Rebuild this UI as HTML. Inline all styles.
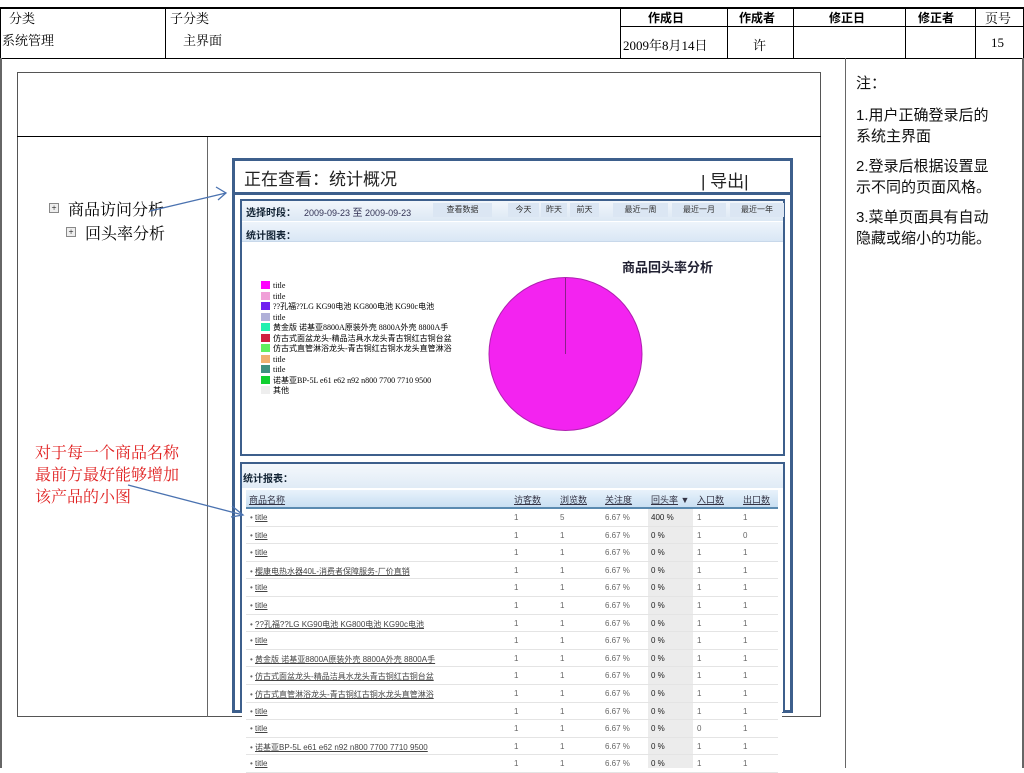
<!DOCTYPE html>
<html><head><meta charset="utf-8"><style>
*{margin:0;padding:0;box-sizing:border-box}
body{width:1024px;height:768px;position:relative;background:#fff;overflow:hidden;font-family:"Liberation Serif","Noto Serif CJK SC","Noto Sans CJK SC",serif;color:#000}
.a{position:absolute}
.l{position:absolute;background:#000}
.g{position:absolute;background:#666}
.t{font-size:13px;white-space:nowrap}
.s{font-family:"Liberation Sans","Noto Sans CJK SC",sans-serif}
.row{position:absolute;left:246px;width:532px;height:17.6px;border-bottom:1px solid #e4e4e4;font-size:8px;color:#666;font-family:"Liberation Sans","Noto Sans CJK SC",sans-serif}
.row span{position:absolute;top:4px}
.row u{color:#444}
.leg{position:absolute;left:261px;font-size:8px;font-family:"Liberation Serif","Noto Sans CJK SC",serif;white-space:nowrap;line-height:10px}
.leg i{display:inline-block;width:9px;height:8px;margin-right:3px;vertical-align:-1px}
.btn{position:absolute;top:203px;height:14px;background:#dbe6f3;font-size:8px;color:#333;text-align:center;line-height:14px;font-family:"Liberation Sans","Noto Sans CJK SC",sans-serif}
</style></head><body>
<div class="l" style="left:0;top:7px;width:1024px;height:2px"></div>
<div class="l" style="left:620px;top:26px;width:404px;height:1px"></div>
<div class="l" style="left:0;top:58px;width:1024px;height:1px"></div>
<div class="l" style="left:0;top:7px;width:1px;height:52px"></div>
<div class="l" style="left:165px;top:7px;width:1px;height:52px"></div>
<div class="l" style="left:620px;top:7px;width:1px;height:52px"></div>
<div class="l" style="left:727px;top:7px;width:1px;height:52px"></div>
<div class="l" style="left:793px;top:7px;width:1px;height:52px"></div>
<div class="l" style="left:905px;top:7px;width:1px;height:52px"></div>
<div class="l" style="left:975px;top:7px;width:1px;height:52px"></div>
<div class="l" style="left:1023px;top:7px;width:1px;height:52px"></div>
<div class="a t" style="left:9px;top:8px">分类</div>
<div class="a t" style="left:2px;top:30px">系统管理</div>
<div class="a t" style="left:170px;top:8px">子分类</div>
<div class="a t" style="left:183px;top:30px">主界面</div>
<div class="a t s" style="left:648px;top:9px;font-weight:bold;font-size:12px">作成日</div>
<div class="a t s" style="left:739px;top:9px;font-weight:bold;font-size:12px">作成者</div>
<div class="a t s" style="left:829px;top:9px;font-weight:bold;font-size:12px">修正日</div>
<div class="a t s" style="left:918px;top:9px;font-weight:bold;font-size:12px">修正者</div>
<div class="a t" style="left:985px;top:8px">页号</div>
<div class="a t" style="left:623px;top:35px">2009年8月14日</div>
<div class="a t" style="left:753px;top:35px">许</div>
<div class="a t" style="left:991px;top:35px">15</div>
<div class="g" style="left:0;top:58px;width:2px;height:710px"></div>
<div class="g" style="left:845px;top:58px;width:1px;height:710px"></div>
<div class="g" style="left:1022px;top:58px;width:2px;height:710px"></div>
<div class="a" style="left:17px;top:72px;width:804px;height:645px;border:1px solid #555"></div>
<div class="l" style="left:17px;top:136px;width:804px;height:1px"></div>
<div class="g" style="left:207px;top:137px;width:1px;height:580px"></div>
<div class="a s" style="left:856px;top:74px;font-size:15px;line-height:20px;width:155px;color:#111">注：</div>
<div class="a s" style="left:856px;top:105px;font-size:15px;line-height:21px;width:140px;color:#111">1.用户正确登录后的系统主界面</div>
<div class="a s" style="left:856px;top:156px;font-size:15px;line-height:21px;width:140px;color:#111">2.登录后根据设置显示不同的页面风格。</div>
<div class="a s" style="left:856px;top:207px;font-size:15px;line-height:21px;width:140px;color:#111">3.菜单页面具有自动隐藏或缩小的功能。</div>
<div class="a" style="left:49px;top:203px;width:10px;height:10px;border:1px solid #888;background:#eee;font-size:9px;line-height:8px;text-align:center">+</div>
<div class="a t" style="left:68px;top:197px;font-size:16px">商品访问分析</div>
<div class="a" style="left:66px;top:227px;width:10px;height:10px;border:1px solid #888;background:#eee;font-size:9px;line-height:8px;text-align:center">+</div>
<div class="a t" style="left:85px;top:221px;font-size:16px">回头率分析</div>
<div class="a" style="left:35px;top:443px;font-size:16px;line-height:22px;color:#e02020;width:152px">对于每一个商品名称最前方最好能够增加该产品的小图</div>
<div class="a" style="left:232px;top:158px;width:561px;height:555px;border:3px solid #3d5f8c;background:#fff"></div>
<div class="a" style="left:232px;top:192px;width:561px;height:3px;background:#3d5f8c"></div>
<div class="a s" style="left:244px;top:165px;font-size:17px;color:#222">正在查看：统计概况</div>
<div class="a s" style="left:701px;top:167px;font-size:17px;color:#222">| 导出|</div>
<div class="a" style="left:240px;top:199px;width:545px;height:257px;border:2px solid #3d5f8c;background:#fff"></div>
<div class="a" style="left:242px;top:201px;width:541px;height:20px;background:linear-gradient(#f2f6fb,#dce8f4)"></div>
<div class="a s" style="left:246px;top:204px;font-size:10px;font-weight:bold;color:#123">选择时段：</div>
<div class="a s" style="left:304px;top:204px;font-size:9px;color:#335">2009-09-23 <span style="font-size:10px">至</span> 2009-09-23</div>
<div class="btn" style="left:433px;width:59px">查看数据</div>
<div class="btn" style="left:508px;width:31px">今天</div>
<div class="btn" style="left:541px;width:26px">昨天</div>
<div class="btn" style="left:570px;width:29px">前天</div>
<div class="btn" style="left:613px;width:55px">最近一周</div>
<div class="btn" style="left:672px;width:54px">最近一月</div>
<div class="btn" style="left:730px;width:54px">最近一年</div>
<div class="a" style="left:242px;top:222px;width:541px;height:20px;background:linear-gradient(#eef4fb,#d9e7f5);border-bottom:1px solid #c8d8ea"></div>
<div class="a s" style="left:246px;top:227px;font-size:10px;font-weight:bold;color:#123">统计图表：</div>
<div class="a s" style="left:622px;top:257px;font-size:13px;font-weight:bold;color:#223">商品回头率分析</div>
<svg class="a" style="left:480px;top:270px" width="170" height="170"><circle cx="85.5" cy="84" r="76.5" fill="#f323f0" stroke="#b020b0" stroke-width="1"/><line x1="85.5" y1="8" x2="85.5" y2="84" stroke="#8a208a" stroke-width="1"/></svg>
<div class="leg" style="top:281px"><i style="background:#f0f"></i>title</div>
<div class="leg" style="top:291.5px"><i style="background:#f0a0d8"></i>title</div>
<div class="leg" style="top:302px"><i style="background:#7020f0"></i>??孔福??LG KG90电池 KG800电池 KG90c电池</div>
<div class="leg" style="top:312.5px"><i style="background:#b0b0d8"></i>title</div>
<div class="leg" style="top:323px"><i style="background:#20f0b0"></i>黄金版 诺基亚8800A原装外壳 8800A外壳 8800A手</div>
<div class="leg" style="top:333.5px"><i style="background:#d02040"></i>仿古式面盆龙头-精品洁具水龙头青古铜红古铜台盆</div>
<div class="leg" style="top:344px"><i style="background:#60f060"></i>仿古式直管淋浴龙头-青古铜红古铜水龙头直管淋浴</div>
<div class="leg" style="top:354.5px"><i style="background:#f0b070"></i>title</div>
<div class="leg" style="top:365px"><i style="background:#409080"></i>title</div>
<div class="leg" style="top:375.5px"><i style="background:#10d030"></i>诺基亚BP-5L e61 e62 n92 n800 7700 7710 9500</div>
<div class="leg" style="top:386px"><i style="background:#eee"></i>其他</div>
<div class="a" style="left:240px;top:462px;width:545px;height:250px;border:2px solid #3d5f8c;border-bottom:none;background:#fff"></div>
<div class="a" style="left:242px;top:464px;width:541px;height:24px;background:linear-gradient(#f4f8fc,#e0ebf6)"></div>
<div class="a s" style="left:243px;top:470px;font-size:10px;font-weight:bold;color:#123">统计报表：</div>
<div class="a" style="left:246px;top:490px;width:532px;height:19px;background:linear-gradient(#e8f2fb,#c9dff2);border-bottom:2px solid #5a8ab0"></div>
<div class="a" style="left:242px;top:712px;width:540px;height:56px;background:#fff"></div>
<div class="a" style="left:648px;top:509px;width:45px;height:259px;background:#ececec"></div>
<div class="a s" style="left:249px;top:493px;font-size:9px;color:#334"><u>商品名称</u></div>
<div class="a s" style="left:514px;top:493px;font-size:9px;color:#334"><u>访客数</u></div>
<div class="a s" style="left:560px;top:493px;font-size:9px;color:#334"><u>浏览数</u></div>
<div class="a s" style="left:605px;top:493px;font-size:9px;color:#334"><u>关注度</u></div>
<div class="a s" style="left:651px;top:493px;font-size:9px;color:#334"><u>回头率</u> ▼</div>
<div class="a s" style="left:697px;top:493px;font-size:9px;color:#334"><u>入口数</u></div>
<div class="a s" style="left:743px;top:493px;font-size:9px;color:#334"><u>出口数</u></div>
<div id="rows"></div>
<script>
var n=["title","title","title","樱康电热水器40L-消费者保障服务-厂价直销","title","title","??孔福??LG KG90电池 KG800电池 KG90c电池","title","黄金版 诺基亚8800A原装外壳 8800A外壳 8800A手","仿古式面盆龙头-精品洁具水龙头青古铜红古铜台盆","仿古式直管淋浴龙头-青古铜红古铜水龙头直管淋浴","title","title","诺基亚BP-5L e61 e62 n92 n800 7700 7710 9500","title"];
var h="";
for(var i=0;i<n.length;i++){var y=509+i*17.6;
h+='<div class="row" style="top:'+y+'px"><span style="left:4px">• <u>'+n[i]+'</u></span><span style="left:268px">1</span><span style="left:314px">'+(i==0?5:1)+'</span><span style="left:359px">6.67 %</span><span style="left:405px;color:#222">'+(i==0?"400 %":"0 %")+'</span><span style="left:451px">'+(i==12?0:1)+'</span><span style="left:497px">'+(i==1?0:1)+'</span></div>';}
document.getElementById("rows").outerHTML=h;
</script>
<svg class="a" style="left:0;top:0" width="1024" height="768"><g stroke="#4a72b0" stroke-width="1.3" fill="none"><line x1="150" y1="211" x2="226" y2="193"/><polyline points="216,187 226,193 218,200"/><line x1="128" y1="485" x2="243" y2="515"/><polyline points="232,506 243,515 231,517"/></g></svg>
</body></html>
